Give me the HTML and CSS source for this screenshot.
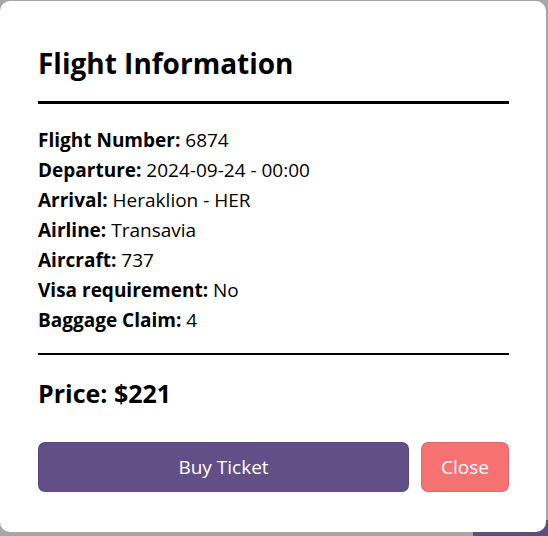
FILE: index.html
```html
<!DOCTYPE html>
<html>
<head>
<meta charset="utf-8">
<link rel="stylesheet" href="styles.css">
</head>
<body>
<div class="page-btn"></div>
<div class="overlay">
  <div class="modal">
    <h2 class="title">Flight Information</h2>
    <hr class="rule rule-top">
    <div class="details">
      <div class="row"><b>Flight Number:</b> 6874</div>
      <div class="row"><b>Departure:</b> 2024-09-24 - 00:00</div>
      <div class="row"><b>Arrival:</b> Heraklion - HER</div>
      <div class="row"><b>Airline:</b> Transavia</div>
      <div class="row"><b>Aircraft:</b> 737</div>
      <div class="row"><b>Visa requirement:</b> No</div>
      <div class="row"><b>Baggage Claim:</b> 4</div>
    </div>
    <hr class="rule rule-bottom">
    <div class="price">Price: $221</div>
    <div class="actions">
      <button class="btn btn-buy">Buy Ticket</button>
      <button class="btn btn-close">Close</button>
    </div>
  </div>
</div>
</body>
</html>
```
FILE: styles.css
```css
html, body {
  margin: 0;
  padding: 0;
  width: 548px;
  height: 536px;
  overflow: hidden;
}
body {
  background: #a4a6aa;
  font-family: "Open Sans", "Noto Sans", sans-serif;
  color: #000;
  position: relative;
}
.page-btn {
  position: absolute;
  left: 473px;
  top: 520px;
  width: 100px;
  height: 40px;
  background: #5b4f7b;
}
.overlay {
  position: relative;
  padding-top: 1px;
}
.modal {
  width: 546px;
  height: 531px;
  box-sizing: border-box;
  background: #fff;
  border-radius: 10px;
  padding: 0 37px 0 38px;
}
.title {
  margin: 0;
  padding-top: 42px;
  font-size: 28px;
  line-height: 40px;
  font-weight: 700;
}
.rule {
  border: 0;
  background: #000;
  margin: 0;
}
.rule-top {
  height: 3px;
  margin-top: 18px;
}
.details {
  padding-top: 21px;
}
.row {
  font-size: 19px;
  line-height: 30px;
}
.row b {
  font-weight: 700;
}
.rule-bottom {
  height: 2px;
  margin-top: 18px;
}
.price {
  font-size: 25px;
  font-weight: 700;
  line-height: 30px;
  margin-top: 23px;
}
.actions {
  display: flex;
  gap: 12px;
  margin-top: 34px;
}
.btn {
  height: 50px;
  border: 1px solid rgba(0,0,0,0.08);
  border-radius: 7px;
  color: #fff;
  font-family: inherit;
  font-size: 19px;
  cursor: pointer;
}
.btn-buy {
  flex: 1;
  background: #634f88;
}
.btn-close {
  width: 88px;
  background: #f67272;
}
```
